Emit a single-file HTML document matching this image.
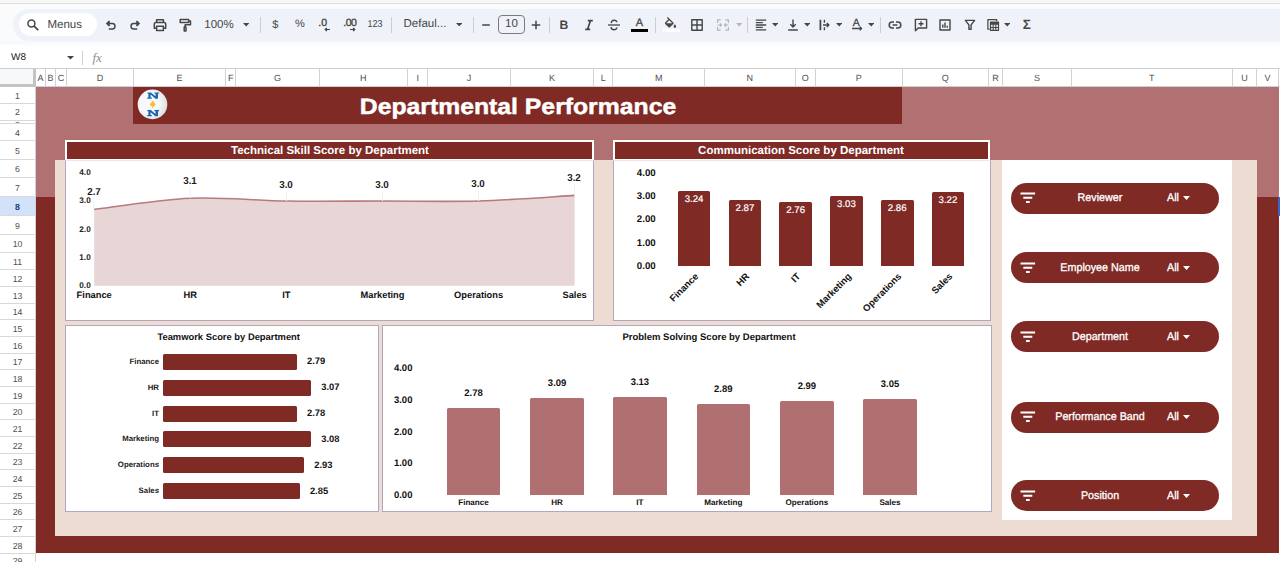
<!DOCTYPE html>
<html><head><meta charset="utf-8"><title>Departmental Performance</title>
<style>
*{box-sizing:border-box;margin:0;padding:0}
html,body{width:1280px;height:562px;overflow:hidden;background:#fff;font-family:"Liberation Sans",sans-serif;text-rendering:geometricPrecision;}
#root{position:relative;width:1280px;height:562px;overflow:hidden;background:#fff}
.abs{position:absolute}
.t{position:absolute;white-space:nowrap;line-height:1}
.ctr{transform:translate(-50%,-50%)}
.rc{transform:translate(-100%,-50%)}
.lc{transform:translate(0,-50%)}
.sep{position:absolute;top:17px;width:1px;height:16px;background:#cbcdd1}
.ch{position:absolute;top:69px;height:17px;border-right:1px solid #d2d2d2;font-size:9px;color:#505050;text-align:center;line-height:18.6px;background:#fff}
.rh{position:absolute;left:0;width:36px;background:#fff;border-bottom:1px solid #d9d9d9;border-right:1px solid #d2d2d2;font-size:8.7px;color:#505050;text-align:center}
.rh span{position:absolute;left:0;right:0;top:calc(50% + 0.8px);transform:translateY(-50%);line-height:1}
.rh.sel{background:#d3e2fb;color:#1b3a6b;font-weight:bold}
.box{position:absolute;background:#fff;border:1px solid #b3a6c0}
.ttl{position:absolute;background:#7f2a25;border:2px solid #fff;color:#fff;font-weight:bold;text-align:center}
.pill{position:absolute;left:1011px;width:208px;height:31px;border-radius:16px;background:#7f2a25;color:#fff}
.pill .lbl{position:absolute;left:89px;top:16.8px;font-size:11.2px;white-space:nowrap;line-height:1;transform:translate(-50%,-50%) scaleX(.96);-webkit-text-stroke:.3px #fff}
.pill .all{position:absolute;left:155.5px;top:16.8px;font-size:11.2px;white-space:nowrap;line-height:1;transform:translate(0,-50%) scaleX(.96);transform-origin:left center;-webkit-text-stroke:.3px #fff}
.pill svg{position:absolute}
.b{font-weight:bold}
</style></head><body><div id="root">
<div class="abs" style="left:36px;top:87px;width:1244px;height:110px;background:#b17172"></div>
<div class="abs" style="left:36px;top:197px;width:1244px;height:356px;background:#7f2a25"></div>
<div class="abs" style="left:55.4px;top:159.6px;width:1201.4px;height:376.6px;background:#ecdcd2"></div>
<div class="abs" style="left:133px;top:87px;width:769px;height:36.5px;background:#7f2a25"></div>
<svg class="abs" style="left:136px;top:88px" width="33" height="33" viewBox="0 0 33 33">
<defs><radialGradient id="lg" cx="35%" cy="45%" r="75%"><stop offset="0.5" stop-color="#f8f8fa"/><stop offset="1" stop-color="#d6d6da"/></radialGradient></defs>
<circle cx="16.5" cy="16.4" r="14.8" fill="url(#lg)"/>
<g fill="#1768b2" transform="translate(.7 0)"><path d="M10.6 4.4h3.6l4.6 3.9V5.6h-1.1V4.4h4.7v1.2h-1.1v5.1h-2.6l-4.8-4.1v2.9h1.2v1.2h-4.6V9.5h1.2V5.6h-1.1z"/>
<path d="M10.6 22h3.6l4.6 3.9v-2.7h-1.1V22h4.7v1.2h-1.1v5.1h-2.6l-4.8-4.1v2.9h1.2v1.2h-4.6v-1.2h1.2v-3.9h-1.1z"/></g>
<path transform="translate(16.7 16.3) scale(.78) translate(-16.4 -16.3)" d="M16.6 12.600c.5 1.700 1 2.400 2.700 3.200v1c-1.700.8-2.200 1.500-2.700 3.200h-.4c-.5-1.700-1-2.400-2.700-3.200v-1c1.700-.8 2.200-1.500 2.700-3.200z" fill="#f1c232" stroke="#f1c232" stroke-width="1.4" stroke-linejoin="round"/>
</svg>
<div class="t b" style="left:518.2px;top:107.1px;color:#fff;font-size:22.3px;transform:translate(-50%,-50%) scaleX(1.11);-webkit-text-stroke:.45px #fff">Departmental Performance</div>
<div class="ttl" style="left:65px;top:140px;width:529px;height:20.6px"></div>
<div class="t ctr b" style="left:330px;top:151.6px;color:#fff;font-size:11.5px">Technical Skill Score by Department</div>
<div class="box" style="left:65px;top:159.5px;width:529px;height:161.5px;border-top-color:#ebe6ee"></div>
<svg class="abs" style="left:0;top:0" width="1280" height="562"><path d="M94.2 209.4 C110.2 207.5 158.3 199.6 190.3 198.2 C222.3 196.8 254.4 200.5 286.4 201.0 C318.4 201.5 350.5 201.0 382.5 201.0 C414.5 201.0 446.6 201.9 478.6 201.0 C510.6 200.1 558.6 196.3 574.6 195.4 L574.6 285.7 L94.2 285.7 Z" fill="#e8d5d5"/><path d="M94.2 209.4 C110.2 207.5 158.3 199.6 190.3 198.2 C222.3 196.8 254.4 200.5 286.4 201.0 C318.4 201.5 350.5 201.0 382.5 201.0 C414.5 201.0 446.6 201.9 478.6 201.0 C510.6 200.1 558.6 196.3 574.6 195.4" fill="none" stroke="#b87a7b" stroke-width="1.6"/></svg>
<div class="t ctr b" style="left:85px;top:173.3px;font-size:8.2px;color:#222">4.0</div>
<div class="t ctr b" style="left:85px;top:201.45000000000002px;font-size:8.2px;color:#222">3.0</div>
<div class="t ctr b" style="left:85px;top:229.60000000000002px;font-size:8.2px;color:#222">2.0</div>
<div class="t ctr b" style="left:85px;top:257.75px;font-size:8.2px;color:#222">1.0</div>
<div class="t ctr b" style="left:85px;top:285.9px;font-size:8.2px;color:#222">0.0</div>
<svg class="abs" style="left:0;top:0" width="1280" height="562"><path d="M93.8 198.5V209.4" stroke="#f4f0f0" stroke-width="1"/><path d="M190.3 187.0V198.2" stroke="#f4f0f0" stroke-width="1"/><path d="M286.4 191.0V201.0" stroke="#f4f0f0" stroke-width="1"/><path d="M382.5 191.0V201.0" stroke="#f4f0f0" stroke-width="1"/><path d="M478.6 190.5V201.0" stroke="#f4f0f0" stroke-width="1"/><path d="M574.6 184.5V195.4" stroke="#f4f0f0" stroke-width="1"/></svg>
<div class="t b" style="left:93.5px;top:193.4px;font-size:10px;color:#1a1a1a;transform:translate(-50%,-50%) scaleX(.98)">2.7</div>
<div class="t b" style="left:190.0px;top:181.9px;font-size:10px;color:#1a1a1a;transform:translate(-50%,-50%) scaleX(.98)">3.1</div>
<div class="t b" style="left:286.09999999999997px;top:185.9px;font-size:10px;color:#1a1a1a;transform:translate(-50%,-50%) scaleX(.98)">3.0</div>
<div class="t b" style="left:382.2px;top:185.9px;font-size:10px;color:#1a1a1a;transform:translate(-50%,-50%) scaleX(.98)">3.0</div>
<div class="t b" style="left:478.3px;top:185.4px;font-size:10px;color:#1a1a1a;transform:translate(-50%,-50%) scaleX(.98)">3.0</div>
<div class="t b" style="left:574.3000000000001px;top:179.4px;font-size:10px;color:#1a1a1a;transform:translate(-50%,-50%) scaleX(.98)">3.2</div>
<div class="t ctr b" style="left:94.2px;top:295.5px;font-size:9.3px;color:#111">Finance</div>
<div class="t ctr b" style="left:190.3px;top:295.5px;font-size:9.3px;color:#111">HR</div>
<div class="t ctr b" style="left:286.4px;top:295.5px;font-size:9.3px;color:#111">IT</div>
<div class="t ctr b" style="left:382.5px;top:295.5px;font-size:9.3px;color:#111">Marketing</div>
<div class="t ctr b" style="left:478.6px;top:295.5px;font-size:9.3px;color:#111">Operations</div>
<div class="t ctr b" style="left:574.6px;top:295.5px;font-size:9.3px;color:#111">Sales</div>
<div class="ttl" style="left:612.5px;top:140px;width:377px;height:20.6px"></div>
<div class="t ctr b" style="left:801px;top:151.6px;color:#fff;font-size:11.5px">Communication Score by Department</div>
<div class="box" style="left:612.5px;top:159.5px;width:378.5px;height:161.5px;border-top-color:#ebe6ee"></div>
<div class="t ctr b" style="left:646.3px;top:173.8px;font-size:9.7px;color:#111">4.00</div>
<div class="t ctr b" style="left:646.3px;top:197.12px;font-size:9.7px;color:#111">3.00</div>
<div class="t ctr b" style="left:646.3px;top:220.44px;font-size:9.7px;color:#111">2.00</div>
<div class="t ctr b" style="left:646.3px;top:243.76000000000002px;font-size:9.7px;color:#111">1.00</div>
<div class="t ctr b" style="left:646.3px;top:267.08000000000004px;font-size:9.7px;color:#111">0.00</div>
<div class="abs" style="left:677.6px;top:191.2px;width:32.8px;height:74.6px;background:#7f2a25;border-radius:1.5px 1.5px 0 0"></div>
<div class="t ctr" style="left:694.0px;top:199.89999999999998px;font-size:9.6px;color:#fff;-webkit-text-stroke:.2px #fff">3.24</div>
<div class="t b" style="left:694.2px;top:271.7px;font-size:9.5px;color:#111;transform-origin:right top;transform:translate(-100%,0) rotate(-45deg)">Finance</div>
<div class="abs" style="left:728.5px;top:199.8px;width:32.8px;height:66.0px;background:#7f2a25;border-radius:1.5px 1.5px 0 0"></div>
<div class="t ctr" style="left:744.9px;top:208.5px;font-size:9.6px;color:#fff;-webkit-text-stroke:.2px #fff">2.87</div>
<div class="t b" style="left:745.1px;top:271.7px;font-size:9.5px;color:#111;transform-origin:right top;transform:translate(-100%,0) rotate(-45deg)">HR</div>
<div class="abs" style="left:779.3px;top:202.2px;width:32.8px;height:63.6px;background:#7f2a25;border-radius:1.5px 1.5px 0 0"></div>
<div class="t ctr" style="left:795.6999999999999px;top:210.89999999999998px;font-size:9.6px;color:#fff;-webkit-text-stroke:.2px #fff">2.76</div>
<div class="t b" style="left:795.9px;top:271.7px;font-size:9.5px;color:#111;transform-origin:right top;transform:translate(-100%,0) rotate(-45deg)">IT</div>
<div class="abs" style="left:830px;top:195.8px;width:32.8px;height:70.0px;background:#7f2a25;border-radius:1.5px 1.5px 0 0"></div>
<div class="t ctr" style="left:846.4px;top:204.5px;font-size:9.6px;color:#fff;-webkit-text-stroke:.2px #fff">3.03</div>
<div class="t b" style="left:846.6px;top:271.7px;font-size:9.5px;color:#111;transform-origin:right top;transform:translate(-100%,0) rotate(-45deg)">Marketing</div>
<div class="abs" style="left:880.8px;top:199.8px;width:32.8px;height:66.0px;background:#7f2a25;border-radius:1.5px 1.5px 0 0"></div>
<div class="t ctr" style="left:897.1999999999999px;top:208.5px;font-size:9.6px;color:#fff;-webkit-text-stroke:.2px #fff">2.86</div>
<div class="t b" style="left:897.4px;top:271.7px;font-size:9.5px;color:#111;transform-origin:right top;transform:translate(-100%,0) rotate(-45deg)">Operations</div>
<div class="abs" style="left:931.5px;top:191.9px;width:32.8px;height:73.9px;background:#7f2a25;border-radius:1.5px 1.5px 0 0"></div>
<div class="t ctr" style="left:947.9px;top:200.6px;font-size:9.6px;color:#fff;-webkit-text-stroke:.2px #fff">3.22</div>
<div class="t b" style="left:948.1px;top:271.7px;font-size:9.5px;color:#111;transform-origin:right top;transform:translate(-100%,0) rotate(-45deg)">Sales</div>
<div class="box" style="left:65px;top:324.5px;width:313.5px;height:187.5px"></div>
<div class="t ctr b" style="left:228.7px;top:336.8px;font-size:9.4px;color:#111">Teamwork Score by Department</div>
<div class="abs" style="left:163.2px;top:353.7px;width:133.5px;height:16px;background:#7f2a25;border-radius:1.5px"></div>
<div class="t rc b" style="left:159px;top:361.7px;font-size:7.8px;color:#222">Finance</div>
<div class="t lc b" style="left:307.0px;top:361.0px;font-size:9.4px;color:#111">2.79</div>
<div class="abs" style="left:163.2px;top:379.6px;width:147.8px;height:16px;background:#7f2a25;border-radius:1.5px"></div>
<div class="t rc b" style="left:159px;top:387.6px;font-size:7.8px;color:#222">HR</div>
<div class="t lc b" style="left:321.3px;top:386.9px;font-size:9.4px;color:#111">3.07</div>
<div class="abs" style="left:163.2px;top:405.5px;width:133.5px;height:16px;background:#7f2a25;border-radius:1.5px"></div>
<div class="t rc b" style="left:159px;top:413.5px;font-size:7.8px;color:#222">IT</div>
<div class="t lc b" style="left:307.0px;top:412.8px;font-size:9.4px;color:#111">2.78</div>
<div class="abs" style="left:163.2px;top:431.4px;width:147.8px;height:16px;background:#7f2a25;border-radius:1.5px"></div>
<div class="t rc b" style="left:159px;top:439.4px;font-size:7.8px;color:#222">Marketing</div>
<div class="t lc b" style="left:321.3px;top:438.7px;font-size:9.4px;color:#111">3.08</div>
<div class="abs" style="left:163.2px;top:457.3px;width:140.7px;height:16px;background:#7f2a25;border-radius:1.5px"></div>
<div class="t rc b" style="left:159px;top:465.3px;font-size:7.8px;color:#222">Operations</div>
<div class="t lc b" style="left:314.2px;top:464.6px;font-size:9.4px;color:#111">2.93</div>
<div class="abs" style="left:163.2px;top:483.2px;width:136.4px;height:16px;background:#7f2a25;border-radius:1.5px"></div>
<div class="t rc b" style="left:159px;top:491.2px;font-size:7.8px;color:#222">Sales</div>
<div class="t lc b" style="left:309.90000000000003px;top:490.5px;font-size:9.4px;color:#111">2.85</div>
<div class="box" style="left:381.5px;top:324.5px;width:610px;height:187.5px"></div>
<div class="t ctr b" style="left:709px;top:337.8px;font-size:9.5px;color:#111">Problem Solving Score by Department</div>
<div class="t ctr b" style="left:403.2px;top:369.4px;font-size:9.5px;color:#111">4.00</div>
<div class="t ctr b" style="left:403.2px;top:400.95px;font-size:9.5px;color:#111">3.00</div>
<div class="t ctr b" style="left:403.2px;top:432.5px;font-size:9.5px;color:#111">2.00</div>
<div class="t ctr b" style="left:403.2px;top:464.04999999999995px;font-size:9.5px;color:#111">1.00</div>
<div class="t ctr b" style="left:403.2px;top:495.59999999999997px;font-size:9.5px;color:#111">0.00</div>
<div class="abs" style="left:446.7px;top:408px;width:53.6px;height:87.3px;background:#b07071;border-radius:1.5px 1.5px 0 0"></div>
<div class="t ctr b" style="left:473.5px;top:394.3px;font-size:9.5px;color:#111">2.78</div>
<div class="t ctr b" style="left:473.5px;top:503px;font-size:8.1px;color:#111">Finance</div>
<div class="abs" style="left:530.3px;top:397.6px;width:53.6px;height:97.7px;background:#b07071;border-radius:1.5px 1.5px 0 0"></div>
<div class="t ctr b" style="left:557.0999999999999px;top:383.90000000000003px;font-size:9.5px;color:#111">3.09</div>
<div class="t ctr b" style="left:557.0999999999999px;top:503px;font-size:8.1px;color:#111">HR</div>
<div class="abs" style="left:613.1px;top:396.5px;width:53.6px;height:98.8px;background:#b07071;border-radius:1.5px 1.5px 0 0"></div>
<div class="t ctr b" style="left:639.9px;top:382.8px;font-size:9.5px;color:#111">3.13</div>
<div class="t ctr b" style="left:639.9px;top:503px;font-size:8.1px;color:#111">IT</div>
<div class="abs" style="left:696.5px;top:404px;width:53.6px;height:91.3px;background:#b07071;border-radius:1.5px 1.5px 0 0"></div>
<div class="t ctr b" style="left:723.3px;top:390.3px;font-size:9.5px;color:#111">2.89</div>
<div class="t ctr b" style="left:723.3px;top:503px;font-size:8.1px;color:#111">Marketing</div>
<div class="abs" style="left:780.1px;top:400.8px;width:53.6px;height:94.5px;background:#b07071;border-radius:1.5px 1.5px 0 0"></div>
<div class="t ctr b" style="left:806.9px;top:387.1px;font-size:9.5px;color:#111">2.99</div>
<div class="t ctr b" style="left:806.9px;top:503px;font-size:8.1px;color:#111">Operations</div>
<div class="abs" style="left:863.2px;top:399px;width:53.6px;height:96.3px;background:#b07071;border-radius:1.5px 1.5px 0 0"></div>
<div class="t ctr b" style="left:890.0px;top:385.3px;font-size:9.5px;color:#111">3.05</div>
<div class="t ctr b" style="left:890.0px;top:503px;font-size:8.1px;color:#111">Sales</div>
<div class="abs" style="left:1002px;top:159.5px;width:230px;height:360.5px;background:#fff"></div>
<div class="pill" style="top:182.5px"><svg style="left:9px;top:9.5px" width="16" height="12" viewBox="0 0 16 12"><path d="M.5 .6h14.6v2H.5zM3.3 4.8h9v2h-9zM6 9h3.7v2H6z" fill="#fff"/></svg><span class="lbl">Reviewer</span><span class="all">All</span><svg style="left:172px;top:13.5px" width="7" height="4" viewBox="0 0 7 4"><path d="M0 0h7L3.5 4z" fill="#fff"/></svg></div>
<div class="pill" style="top:252px"><svg style="left:9px;top:9.5px" width="16" height="12" viewBox="0 0 16 12"><path d="M.5 .6h14.6v2H.5zM3.3 4.8h9v2h-9zM6 9h3.7v2H6z" fill="#fff"/></svg><span class="lbl">Employee Name</span><span class="all">All</span><svg style="left:172px;top:13.5px" width="7" height="4" viewBox="0 0 7 4"><path d="M0 0h7L3.5 4z" fill="#fff"/></svg></div>
<div class="pill" style="top:321.3px"><svg style="left:9px;top:9.5px" width="16" height="12" viewBox="0 0 16 12"><path d="M.5 .6h14.6v2H.5zM3.3 4.8h9v2h-9zM6 9h3.7v2H6z" fill="#fff"/></svg><span class="lbl">Department</span><span class="all">All</span><svg style="left:172px;top:13.5px" width="7" height="4" viewBox="0 0 7 4"><path d="M0 0h7L3.5 4z" fill="#fff"/></svg></div>
<div class="pill" style="top:401.7px"><svg style="left:9px;top:9.5px" width="16" height="12" viewBox="0 0 16 12"><path d="M.5 .6h14.6v2H.5zM3.3 4.8h9v2h-9zM6 9h3.7v2H6z" fill="#fff"/></svg><span class="lbl">Performance Band</span><span class="all">All</span><svg style="left:172px;top:13.5px" width="7" height="4" viewBox="0 0 7 4"><path d="M0 0h7L3.5 4z" fill="#fff"/></svg></div>
<div class="pill" style="top:480.3px"><svg style="left:9px;top:9.5px" width="16" height="12" viewBox="0 0 16 12"><path d="M.5 .6h14.6v2H.5zM3.3 4.8h9v2h-9zM6 9h3.7v2H6z" fill="#fff"/></svg><span class="lbl">Position</span><span class="all">All</span><svg style="left:172px;top:13.5px" width="7" height="4" viewBox="0 0 7 4"><path d="M0 0h7L3.5 4z" fill="#fff"/></svg></div>
<div class="abs" style="left:0;top:0;width:1280px;height:3px;background:#f8f7f5"></div>
<div class="abs" style="left:0;top:4px;width:1280px;height:37px;background:#f9fbfd"></div>
<div class="abs" style="left:0;top:3px;width:1280px;height:1px;background:#dddddd"></div>
<div class="abs" style="left:13px;top:9px;width:1290px;height:31.5px;background:#eff2f8;border-radius:16px 0 0 16px"></div>
<div class="abs" style="left:0;top:40.5px;width:1280px;height:6.5px;background:linear-gradient(#f4f6fb,#fff)"></div>
<div class="abs" style="left:19px;top:13px;width:78px;height:23px;background:#fff;border-radius:12px"></div>
<svg class="abs" style="left:25.0px;top:16.8px" width="16" height="16" viewBox="0 0 16 16" fill="none" stroke="#444746" stroke-width="1.3" stroke-linejoin="round"><circle cx="6.4" cy="6.4" r="3.5" stroke-width="1.5"/><path d="M9.1 9.1L13.2 13.2" stroke-width="1.7"/></svg>
<div class="t lc" style="left:47.5px;top:25.5px;font-size:11.5px;color:#444746">Menus</div>
<svg class="abs" style="left:103.0px;top:17.3px" width="16" height="16" viewBox="0 0 16 16" fill="none" stroke="#444746" stroke-width="1.3" stroke-linejoin="round"><path d="M6.4 4L3.9 6.500L6.400 9M4.200 6.500H9.300a2.700 2.700 0 0 1 0 5.400H5.800" stroke-width="1.45" stroke-linejoin="miter"/><path d="M6.600 3.800V9.200L3.800 6.500z" fill="#444746" stroke="none"/></svg>
<svg class="abs" style="left:127.30000000000001px;top:17.3px" width="16" height="16" viewBox="0 0 16 16" fill="none" stroke="#444746" stroke-width="1.3" stroke-linejoin="round"><path d="M9.600 4L12.100 6.500L9.600 9M11.800 6.500H6.700a2.700 2.700 0 0 0 0 5.400H10.200" stroke-width="1.45" stroke-linejoin="miter"/><path d="M9.400 3.800V9.200L12.200 6.500z" fill="#444746" stroke="none"/></svg>
<svg class="abs" style="left:152.4px;top:17.0px" width="16" height="16" viewBox="0 0 16 16" fill="none" stroke="#444746" stroke-width="1.3" stroke-linejoin="round"><path d="M4.6 5.6V2.8h6.8v2.8M4.6 11.2H2.3V6.9a1.3 1.3 0 0 1 1.3-1.3h8.8a1.3 1.3 0 0 1 1.3 1.3v4.3h-2.3M4.6 9.3h6.8v4.1H4.6z" stroke-width="1.5"/></svg>
<svg class="abs" style="left:176.6px;top:17.4px" width="16" height="16" viewBox="0 0 16 16" fill="none" stroke="#444746" stroke-width="1.3" stroke-linejoin="round"><path d="M3.2 2.6h8.4v3H3.2zM11.6 4.1h1.9v3.6H8.1v2.2M7.2 9.9h1.8v4.1H7.2z" stroke-width="1.5"/></svg>
<div class="t ctr" style="left:219px;top:25.9px;font-size:11.5px;color:#444746;">100%</div>
<svg class="abs" style="left:243.3px;top:23.4px" width="6.4" height="3.6" viewBox="0 0 6.4 3.6"><path d="M0 0h6.4L3.2 3.4z" fill="#444746"/></svg>
<div class="sep" style="left:259.6px"></div>
<div class="t ctr" style="left:275.3px;top:24.6px;font-size:11px;color:#444746;">$</div>
<div class="t ctr" style="left:300px;top:24.3px;font-size:11px;color:#444746;">%</div>
<div class="t ctr" style="left:322.6px;top:23.400px;font-size:10.5px;color:#444746;-webkit-text-stroke:.35px #444746">.0</div>
<svg class="abs" style="left:324.1px;top:26.7px" width="7" height="5" viewBox="0 0 7 5" fill="none" stroke="#444746" stroke-width="1.3" stroke-linejoin="round"><path d="M6 2.5H1.2M2.9 .8L1.2 2.5L2.9 4.2" stroke-width="1.2"/></svg>
<div class="t ctr" style="left:349.800px;top:23.400px;font-size:10.5px;color:#444746;-webkit-text-stroke:.35px #444746;letter-spacing:-.5px">.00</div>
<svg class="abs" style="left:349.1px;top:26.7px" width="7" height="5" viewBox="0 0 7 5" fill="none" stroke="#444746" stroke-width="1.3" stroke-linejoin="round"><path d="M1 2.5H5.8M4.1 .8L5.8 2.5L4.1 4.2" stroke-width="1.2"/></svg>
<div class="t ctr" style="left:375.3px;top:25.3px;font-size:10px;color:#444746;transform:translate(-50%,-50%) scaleX(.9)">123</div>
<div class="sep" style="left:390.6px"></div>
<div class="t lc" style="left:403.5px;top:25.1px;font-size:11.5px;color:#444746">Defaul...</div>
<svg class="abs" style="left:455.6px;top:22.9px" width="6.4" height="3.6" viewBox="0 0 6.4 3.6"><path d="M0 0h6.4L3.2 3.4z" fill="#444746"/></svg>
<div class="sep" style="left:472.8px"></div>
<svg class="abs" style="left:478.2px;top:16.8px" width="16" height="16" viewBox="0 0 16 16" fill="none" stroke="#444746" stroke-width="1.3" stroke-linejoin="round"><path d="M4.2 8h7.6" stroke-width="1.5"/></svg>
<div class="abs" style="left:498px;top:15px;width:27px;height:18.5px;border:1px solid #7a7d7f;border-radius:4px"></div>
<div class="t ctr" style="left:511.5px;top:25.3px;font-size:11.5px;color:#444746;">10</div>
<svg class="abs" style="left:527.8px;top:16.8px" width="16" height="16" viewBox="0 0 16 16" fill="none" stroke="#444746" stroke-width="1.3" stroke-linejoin="round"><path d="M3.8 8h8.4M8 3.8v8.4" stroke-width="1.5"/></svg>
<div class="sep" style="left:548.6px"></div>
<div class="t ctr b" style="left:563.8px;top:24.800px;font-size:12.200px;color:#444746">B</div>
<svg class="abs" style="left:580.8px;top:16.8px" width="16" height="16" viewBox="0 0 16 16" fill="none" stroke="#444746" stroke-width="1.3" stroke-linejoin="round"><path d="M6.800 3.600h5M4.200 12.400h5M9.500 3.600L6.500 12.400" stroke-width="1.700" stroke-linejoin="miter"/></svg>
<svg class="abs" style="left:606.2px;top:16.6px" width="16" height="16" viewBox="0 0 16 16" fill="none" stroke="#444746" stroke-width="1.3" stroke-linejoin="round"><path d="M2 8h12" stroke-width="1.300"/><path d="M5.400 6.200C5.100 4.300 6.400 3.300 8 3.300s2.700.8 2.800 2M5 10.200c.2 1.700 1.500 2.600 3 2.600s3-.9 2.900-2.400" stroke-width="1.400"/></svg>
<div class="t ctr" style="left:639.3px;top:23px;font-size:11px;color:#444746;-webkit-text-stroke:.3px #444746">A</div>
<div class="abs" style="left:631px;top:28.500px;width:17px;height:3px;background:#000"></div>
<div class="sep" style="left:654.6px"></div>
<svg class="abs" style="left:663.2px;top:17px" width="15" height="15" viewBox="0 0 24 24"><path fill="#444746" d="M16.56 8.94L7.62 0 6.21 1.41l2.38 2.38-5.15 5.15c-.59.59-.59 1.54 0 2.12l5.5 5.5c.29.29.68.44 1.06.44s.77-.15 1.06-.44l5.5-5.500c.59-.58.59-1.53 0-2.12zM5.21 10L10 5.21 14.790 10H5.210zM19 11.500s-2 2.170-2 3.500c0 1.100.9 2 2 2s2-.9 2-2c0-1.330-2-3.500-2-3.500z"/></svg>
<div class="abs" style="left:662.5px;top:29px;width:17px;height:2.6px;background:#fff"></div>
<svg class="abs" style="left:689.3px;top:17.0px" width="16" height="16" viewBox="0 0 16 16" fill="none" stroke="#444746" stroke-width="1.3" stroke-linejoin="round"><path d="M2.8 2.8h10.4v10.4H2.800zM8 2.800v10.4M2.800 8h10.4" stroke-width="1.4"/></svg>
<svg class="abs" style="left:715.0px;top:17.0px" width="16" height="16" viewBox="0 0 16 16" fill="none" stroke="#b4b6b8" stroke-width="1.3" stroke-linejoin="round"><path d="M2.6 6V2.8h3.2M10.200 2.800h3.2V6M13.4 10v3.2h-3.2M5.800 13.200H2.600V10M2.600 8h3.800M5 6.500L6.500 8L5 9.500M13.400 8H9.600M11 6.500L9.500 8L11 9.500" stroke-width="1.2"/></svg>
<svg class="abs" style="left:736.3px;top:23.4px" width="6.4" height="3.6" viewBox="0 0 6.4 3.6"><path d="M0 0h6.4L3.2 3.4z" fill="#b4b6b8"/></svg>
<div class="sep" style="left:747.1px"></div>
<svg class="abs" style="left:753.3px;top:17.0px" width="16" height="16" viewBox="0 0 16 16" fill="none" stroke="#444746" stroke-width="1.3" stroke-linejoin="round"><path d="M2.800 3.200h10.4M2.800 5.600h7M2.800 8h10.4M2.800 10.400h7M2.800 12.800h10.4" stroke-width="1.3"/></svg>
<svg class="abs" style="left:772.0999999999999px;top:23.4px" width="6.4" height="3.6" viewBox="0 0 6.4 3.6"><path d="M0 0h6.4L3.2 3.4z" fill="#444746"/></svg>
<svg class="abs" style="left:785.0px;top:17.0px" width="16" height="16" viewBox="0 0 16 16" fill="none" stroke="#444746" stroke-width="1.3" stroke-linejoin="round"><path d="M8 2.600v7.200M5.300 7.200L8 9.900L10.700 7.200M3.200 13h9.600" stroke-width="1.4"/></svg>
<svg class="abs" style="left:803.5999999999999px;top:23.4px" width="6.4" height="3.6" viewBox="0 0 6.4 3.6"><path d="M0 0h6.4L3.2 3.4z" fill="#444746"/></svg>
<svg class="abs" style="left:816.3px;top:17.0px" width="16" height="16" viewBox="0 0 16 16" fill="none" stroke="#444746" stroke-width="1.3" stroke-linejoin="round"><path d="M4.400 2.800v10.400" stroke-width="1.800"/><path d="M8.400 2.800v3M8.400 10.200v3M7 8h5.600M10.800 5.900L12.900 8L10.800 10.100" stroke-width="1.400"/></svg>
<svg class="abs" style="left:835.5999999999999px;top:23.4px" width="6.4" height="3.6" viewBox="0 0 6.4 3.6"><path d="M0 0h6.4L3.2 3.4z" fill="#444746"/></svg>
<div class="t ctr" style="left:856.3px;top:22.800px;font-size:10.5px;color:#444746;-webkit-text-stroke:.3px #444746">A</div>
<svg class="abs" style="left:851.3px;top:26.2px" width="12" height="5" viewBox="0 0 12 5" fill="none" stroke="#444746" stroke-width="1.3" stroke-linejoin="round"><path d="M1 2.500h9.500M8.700 .6L10.600 2.500L8.700 4.400" stroke-width="1.3"/></svg>
<svg class="abs" style="left:867.5999999999999px;top:23.4px" width="6.4" height="3.6" viewBox="0 0 6.4 3.6"><path d="M0 0h6.4L3.2 3.4z" fill="#444746"/></svg>
<div class="sep" style="left:879.6px"></div>
<svg class="abs" style="left:887.0px;top:17.0px" width="16" height="16" viewBox="0 0 16 16" fill="none" stroke="#444746" stroke-width="1.3" stroke-linejoin="round"><path d="M7 5H5.200a3 3 0 0 0 0 6H7M9 5h1.800a3 3 0 0 1 0 6H9M5.600 8h4.800" stroke-width="1.5"/></svg>
<svg class="abs" style="left:912.5px;top:17.3px" width="16" height="16" viewBox="0 0 16 16" fill="none" stroke="#444746" stroke-width="1.3" stroke-linejoin="round"><path d="M2.400 2.400h11.200v8.600H5.200L2.400 13.800zM8 4.200v5M5.500 6.700h5" stroke-width="1.400"/></svg>
<svg class="abs" style="left:937.2px;top:17.0px" width="16" height="16" viewBox="0 0 16 16" fill="none" stroke="#444746" stroke-width="1.3" stroke-linejoin="round"><path d="M3 3h10v10H3zM5.800 10.800V7.600M8 10.800V5.400M10.200 10.800V8.800" stroke-width="1.4"/></svg>
<svg class="abs" style="left:962.0px;top:17.0px" width="16" height="16" viewBox="0 0 16 16" fill="none" stroke="#444746" stroke-width="1.3" stroke-linejoin="round"><path d="M3.400 3.400h9.200L9.100 7.900v4.300H6.900V7.900z" stroke-width="1.4"/></svg>
<svg class="abs" style="left:985.2px;top:17.0px" width="16" height="16" viewBox="0 0 16 16" fill="none" stroke="#444746" stroke-width="1.3" stroke-linejoin="round"><path d="M4.600 12.200H2.900V2.700h8.800v1.500" stroke-width="1.200"/><path d="M5.500 5h8v8.400h-8z" stroke-width="1.200"/><path d="M5.500 5h8v2.800h-8z" fill="#444746" stroke="none"/><path d="M5.500 10.500h8M8.200 7.600v5.800M10.800 7.600v5.800" stroke-width="1.100"/></svg>
<svg class="abs" style="left:1003.8px;top:23.4px" width="6.4" height="3.6" viewBox="0 0 6.4 3.6"><path d="M0 0h6.4L3.2 3.4z" fill="#444746"/></svg>
<div class="t ctr b" style="left:1026.800px;top:25.300px;font-size:13.500px;color:#444746">Σ</div>
<div class="t lc" style="left:11px;top:57.9px;font-size:10px;color:#222">W8</div>
<svg class="abs" style="left:66.5px;top:55.5px" width="7" height="4"><path d="M0 0h7L3.5 3.6z" fill="#444"/></svg>
<div class="abs" style="left:82px;top:51px;width:1px;height:14px;background:#d0d0d0"></div>
<div class="t lc" style="left:92.5px;top:57.3px;font-size:13px;color:#8e8e8e;font-style:italic;font-family:'Liberation Serif',serif">fx</div>
<div class="abs" style="left:0;top:68px;width:1280px;height:19px;background:#fff;border-top:1px solid #cfcfcf;border-bottom:1px solid #cfcfcf"></div>
<div class="ch" style="left:36px;width:10.1px">A</div>
<div class="ch" style="left:46.1px;width:10.0px">B</div>
<div class="ch" style="left:56.1px;width:10.9px">C</div>
<div class="ch" style="left:67px;width:66.8px">D</div>
<div class="ch" style="left:133.8px;width:92.3px">E</div>
<div class="ch" style="left:226.1px;width:10.4px">F</div>
<div class="ch" style="left:236.5px;width:83.0px">G</div>
<div class="ch" style="left:319.5px;width:88.7px">H</div>
<div class="ch" style="left:408.2px;width:20.0px">I</div>
<div class="ch" style="left:428.2px;width:82.8px">J</div>
<div class="ch" style="left:511px;width:82.8px">K</div>
<div class="ch" style="left:593.8px;width:19.7px">L</div>
<div class="ch" style="left:613.5px;width:91.3px">M</div>
<div class="ch" style="left:704.8px;width:90.9px">N</div>
<div class="ch" style="left:795.7px;width:20.3px">O</div>
<div class="ch" style="left:816px;width:86.5px">P</div>
<div class="ch" style="left:902.5px;width:86.3px">Q</div>
<div class="ch" style="left:988.8px;width:14.2px">R</div>
<div class="ch" style="left:1003px;width:68.8px">S</div>
<div class="ch" style="left:1071.8px;width:161.0px">T</div>
<div class="ch" style="left:1232.8px;width:24.2px">U</div>
<div class="ch" style="left:1257px;width:22.2px">V</div>
<div class="abs" style="left:0;top:69px;width:36px;height:18px;background:#f7f8f9;border-right:3px solid #c4c4c4;border-bottom:3px solid #c4c4c4"></div>
<div class="rh" style="top:87px;height:16.5px"><span>1</span></div>
<div class="rh" style="top:103.5px;height:17.0px"><span>2</span></div>
<div class="rh" style="top:120.5px;height:3.5px;overflow:hidden"><span style="top:0.5px;transform:none;font-size:9px">3</span></div>
<div class="rh" style="top:124px;height:17px"><span>4</span></div>
<div class="rh" style="top:141px;height:18.5px"><span>5</span></div>
<div class="rh" style="top:159.5px;height:18.5px"><span>6</span></div>
<div class="rh" style="top:178px;height:19px"><span>7</span></div>
<div class="rh sel" style="top:197px;height:19px"><span>8</span></div>
<div class="rh" style="top:216px;height:18.5px"><span>9</span></div>
<div class="rh" style="top:234.5px;height:18.5px"><span>10</span></div>
<div class="rh" style="top:253px;height:17px"><span>11</span></div>
<div class="rh" style="top:270px;height:17px"><span>12</span></div>
<div class="rh" style="top:287px;height:16.5px"><span>13</span></div>
<div class="rh" style="top:303.5px;height:16.5px"><span>14</span></div>
<div class="rh" style="top:320px;height:17px"><span>15</span></div>
<div class="rh" style="top:337px;height:16.5px"><span>16</span></div>
<div class="rh" style="top:353.5px;height:16.5px"><span>17</span></div>
<div class="rh" style="top:370px;height:17px"><span>18</span></div>
<div class="rh" style="top:387px;height:16.5px"><span>19</span></div>
<div class="rh" style="top:403.5px;height:16.5px"><span>20</span></div>
<div class="rh" style="top:420px;height:17px"><span>21</span></div>
<div class="rh" style="top:437px;height:16.5px"><span>22</span></div>
<div class="rh" style="top:453.5px;height:16.5px"><span>23</span></div>
<div class="rh" style="top:470px;height:17px"><span>24</span></div>
<div class="rh" style="top:487px;height:16.5px"><span>25</span></div>
<div class="rh" style="top:503.5px;height:16.5px"><span>26</span></div>
<div class="rh" style="top:520px;height:17px"><span>27</span></div>
<div class="rh" style="top:537px;height:16.5px"><span>28</span></div>
<div class="rh" style="top:553.5px;height:15.0px"><span>29</span></div>
<div class="abs" style="left:36px;top:553px;width:1244px;height:9px;background:#fff"></div>
<div class="abs" style="left:1278.7px;top:87px;width:2px;height:480px;background:#fff"></div>
<div class="abs" style="left:1278.2px;top:197px;width:2px;height:19px;background:#3b62c4"></div>
</div></body></html>
